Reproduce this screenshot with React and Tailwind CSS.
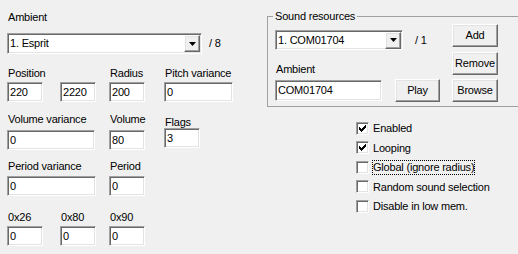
const sunken =
  'bg-white border border-t-[#a0a0a0] border-l-[#a0a0a0] border-r-white border-b-white shadow-[inset_1px_1px_0_#696969,inset_-1px_-1px_0_#e3e3e3]'
const raised =
  'bg-[#f0f0f0] border border-t-white border-l-white border-r-[#696969] border-b-[#696969] shadow-[inset_-1px_-1px_0_#a0a0a0,inset_1px_1px_0_#e3e3e3]'

function TextBox({ value, className = '' }) {
  return (
    <div className={`h-[20px] pl-[2px] flex items-center whitespace-nowrap ${sunken} ${className}`}>
      {value}
    </div>
  )
}

function Button({ children, className = '' }) {
  return (
    <div className={`h-[23px] flex items-center justify-center ${raised} ${className}`}>
      {children}
    </div>
  )
}

function Combo({ value, className = '' }) {
  return (
    <div className={`flex items-center pl-[2px] pr-[1px] ${sunken} ${className}`}>
      <span className="flex-1 whitespace-nowrap">{value}</span>
      <div className={`w-[16px] h-[17px] flex items-center justify-center ${raised}`}>
        <svg width="7" height="4" viewBox="0 0 7 4">
          <path d="M0 0h7L3.5 4z" fill="#000" />
        </svg>
      </div>
    </div>
  )
}

function Label({ children, className = '' }) {
  return <div className={`h-[14px] leading-[14px] pl-[1px] whitespace-nowrap ${className}`}>{children}</div>
}

// column width is fixed by the input; a longer label just runs over
function Field({ label, value, w, className = '', gap = 'mt-[2px]' }) {
  return (
    <div className={`flex flex-col shrink-0 ${w} ${className}`}>
      <Label>{label}</Label>
      <TextBox value={value} className={`w-full ${gap}`} />
    </div>
  )
}

function CheckBox({ checked, label, focused, h }) {
  return (
    <div className={`flex items-center ${h}`}>
      <div className={`w-[13px] h-[13px] flex items-center justify-center ${sunken}`}>
        {checked && (
          <svg width="7" height="7" viewBox="0 0 7 7" shapeRendering="crispEdges">
            <path d="M0 2L2 4L7 -1V2L2 7L0 5Z" fill="#000" />
          </svg>
        )}
      </div>
      {focused ? (
        <span className="ml-[3px] border border-dotted border-black leading-[13px] whitespace-nowrap">{label}</span>
      ) : (
        <span className="ml-[4px] leading-[14px] whitespace-nowrap">{label}</span>
      )}
    </div>
  )
}

export default function App() {
  return (
    <div className="w-[518px] h-[254px] bg-[#f0f0f0] text-[11px] tracking-[-0.2px] text-black font-['Liberation_Sans',Arial,sans-serif] flex overflow-hidden">
      {/* left column */}
      <div className="w-[260px] shrink-0 pl-[7px] pt-[10px] flex flex-col">
        <Label>Ambient</Label>
        <div className="mt-[9px] flex items-center">
          <Combo value="1. Esprit" className="w-[195px] h-[21px]" />
          <span className="ml-[7px]">/ 8</span>
        </div>

        <div className="mt-[12px] flex">
          <Field label="Position" value="220" w="w-[36px]" />
          <Field label="" value="2220" w="w-[36px]" className="ml-[17px]" />
          <Field label="Radius" value="200" w="w-[36px]" className="ml-[13px]" />
          <Field label="Pitch variance" value="0" w="w-[69px]" className="ml-[19px]" />
        </div>

        <div className="mt-[10px] flex items-start">
          <Field label="Volume variance" value="0" w="w-[88px]" gap="mt-[4px]" />
          <Field label="Volume" value="80" w="w-[36px]" gap="mt-[4px]" className="ml-[14px]" />
          <div className="ml-[19px] mt-[3px] w-[36px] flex flex-col">
            <Label>Flags</Label>
            <TextBox value="3" className="w-full -mt-[1px] items-start pt-[1px]" />
          </div>
        </div>

        <div className="mt-[9px] flex">
          <Field label="Period variance" value="0" w="w-[89px]" gap="mt-[3px]" />
          <Field label="Period" value="0" w="w-[36px]" gap="mt-[3px]" className="ml-[13px]" />
        </div>

        <div className="mt-[14px] flex">
          <Field label="0x26" value="0" w="w-[36px]" />
          <Field label="0x80" value="0" w="w-[36px]" className="ml-[17px]" />
          <Field label="0x90" value="0" w="w-[36px]" className="ml-[13px]" />
        </div>
      </div>

      {/* right column */}
      <div className="flex-1 pl-[7px] flex flex-col">
        <fieldset className="mt-[9px] border-t border-l border-b border-r-0 border-[#a0a0a0] w-[260px] pb-[4px]">
          <legend className="ml-[5px] px-[2px] leading-[14px]">Sound resources</legend>
          <div className="pl-[7px] flex">
            <div className="w-[170px] pt-[7px] flex flex-col">
              <div className="flex items-center">
                <Combo value="1. COM01704" className="w-[128px] h-[20px]" />
                <span className="ml-[12px]">/ 1</span>
              </div>
              <Label className="mt-[12px]">Ambient</Label>
              <div className="mt-[3px] flex items-center">
                <TextBox value="COM01704" className="w-[107px] h-[21px]" />
                <Button className="ml-[13px] w-[45px]">Play</Button>
              </div>
            </div>
            <div className="ml-[7px] pt-[1px] flex flex-col">
              <Button className="w-[46px]">Add</Button>
              <Button className="w-[46px] mt-[5px]">Remove</Button>
              <Button className="w-[46px] mt-[4px]">Browse</Button>
            </div>
          </div>
        </fieldset>

        <div className="mt-[11px] ml-[89px] flex flex-col">
          <CheckBox checked label="Enabled" h="h-[20px]" />
          <CheckBox checked label="Looping" h="h-[19px]" />
          <CheckBox label="Global (ignore radius)" focused h="h-[20px]" />
          <CheckBox label="Random sound selection" h="h-[19px]" />
          <CheckBox label="Disable in low mem." h="h-[20px]" />
        </div>
      </div>
    </div>
  )
}
